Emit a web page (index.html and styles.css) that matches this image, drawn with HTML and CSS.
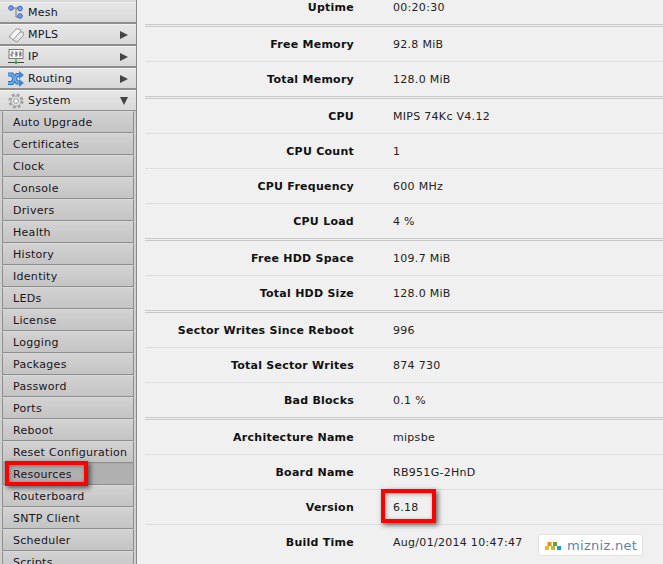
FILE: index.html
```html
<!DOCTYPE html>
<html lang="en">
<head>
<meta charset="utf-8">
<title>Resources</title>
<link rel="stylesheet" href="styles.css">
</head>
<body>
<div class="app">
  <nav class="side">
    <div class="top"><svg class="ico" viewBox="0 0 16 16"><path d="M3 3H13M8 3V12H13" fill="none" stroke="#777" stroke-width="1"/><circle cx="3" cy="3" r="2.3" fill="#7f9fe8" stroke="#3d62c4"/><circle cx="12" cy="3.5" r="2.3" fill="#7f9fe8" stroke="#3d62c4"/><circle cx="12" cy="11" r="2.3" fill="#7f9fe8" stroke="#3d62c4"/></svg><span>Mesh</span></div>
    <div class="top"><svg class="ico" viewBox="0 0 16 16"><path d="M1 10L8 2H12L13 5L6 13Z" fill="#f4f4f4" stroke="#999"/><path d="M5 13L12 5H15L16 8L9 15Z" fill="#e8e8e8" stroke="#999"/></svg><span>MPLS</span><i class="arrow"></i></div>
    <div class="top"><svg class="ico" viewBox="0 0 16 16"><rect x="1" y="0.500" width="14" height="9" fill="#f6f6f6" stroke="#777"/><path d="M3 3H5V5H3V7H5M7 3H9V5H7H9V7H7M11 3H13V5H11H13V7H11" fill="none" stroke="#555" stroke-width=".8"/><path d="M0 13.500H16" stroke="#444"/><path d="M8 10V13" stroke="#3a3"/><circle cx="8" cy="13.500" r="1.500" fill="#2fae2f"/></svg><span>IP</span><i class="arrow"></i></div>
    <div class="top"><svg class="ico" viewBox="0 0 16 16"><path d="M0 3.500H4L9 11.500H12M0 12H4L9 4H12" fill="none" stroke="#2f72c8" stroke-width="4"/><path d="M0 3.500H4L9 11.500H12M0 12H4L9 4H12" fill="none" stroke="#6aa9ea" stroke-width="2"/><path d="M11 0L16 4L11 8ZM11 8L16 12L11 16Z" fill="#3d86d8"/></svg><span>Routing</span><i class="arrow"></i></div>
    <div class="top"><svg class="ico" viewBox="0 0 16 16"><circle cx="8" cy="8" r="6.200" fill="none" stroke="#a2a2a2" stroke-width="2.800" stroke-dasharray="2.700 2.170"/><circle cx="8" cy="8" r="5" fill="#e4e4e4" stroke="#a8a8a8"/><circle cx="8" cy="8" r="2.400" fill="#f4f4f4" stroke="#999"/></svg><span>System</span><i class="arrow down"></i></div>
    <div class="sub">
      <a>Auto Upgrade</a><a>Certificates</a><a>Clock</a><a>Console</a><a>Drivers</a><a>Health</a><a>History</a><a>Identity</a><a>LEDs</a><a>License</a><a>Logging</a><a>Packages</a><a>Password</a><a>Ports</a><a>Reboot</a><a>Reset Configuration</a><a class="on">Resources</a><a>Routerboard</a><a>SNTP Client</a><a>Scheduler</a><a>Scripts</a>
    </div>
    <div class="mark mark-res"></div>
  </nav>
  <main class="main">
    <section class="group">
      <div class="row"><b>Uptime</b><span>00:20:30</span></div>
    </section>
    <section class="group">
      <div class="row"><b>Free Memory</b><span>92.8 MiB</span></div>
      <div class="row"><b>Total Memory</b><span>128.0 MiB</span></div>
    </section>
    <section class="group">
      <div class="row"><b>CPU</b><span>MIPS 74Kc V4.12</span></div>
      <div class="row"><b>CPU Count</b><span>1</span></div>
      <div class="row"><b>CPU Frequency</b><span>600 MHz</span></div>
      <div class="row"><b>CPU Load</b><span>4 %</span></div>
    </section>
    <section class="group">
      <div class="row"><b>Free HDD Space</b><span>109.7 MiB</span></div>
      <div class="row"><b>Total HDD Size</b><span>128.0 MiB</span></div>
    </section>
    <section class="group">
      <div class="row"><b>Sector Writes Since Reboot</b><span>996</span></div>
      <div class="row"><b>Total Sector Writes</b><span>874 730</span></div>
      <div class="row"><b>Bad Blocks</b><span>0.1 %</span></div>
    </section>
    <section class="group">
      <div class="row"><b>Architecture Name</b><span>mipsbe</span></div>
      <div class="row"><b>Board Name</b><span>RB951G-2HnD</span></div>
      <div class="row"><b>Version</b><span>6.18</span></div>
      <div class="row"><b>Build Time</b><span>Aug/01/2014 10:47:47</span></div>
    </section>
    <div class="mark mark-ver"></div>
    <div class="badge"><svg class="logo" viewBox="0 0 16 9"><rect x="0" y="5" width="4" height="4" fill="#f5b81c"/><rect x="2.500" y="1" width="4" height="4" fill="#ee8a1d"/><rect x="6" y="5" width="4" height="4" fill="#a6c93c"/><rect x="8" y="1" width="4" height="4" fill="#7d9a34"/><rect x="12" y="5" width="4" height="4" fill="#1a9ad6"/></svg><span>mizniz.net</span></div>
  </main>
</div>
</body>
</html>
```
FILE: styles.css
```css
* { box-sizing: border-box; }
html, body { margin: 0; height: 100%; overflow: hidden; }
body { background: #f0f0f0; font: 11px "DejaVu Sans", Verdana, sans-serif; letter-spacing: .29px; color: #111; }
.app { display: flex; height: 564px; overflow: hidden; position: relative; }
.side { width: 137px; flex: none; border-right: 1px solid #8a8a8a; background: #d8d8d8; padding-top: 2px; }
.top {
  height: 22px; display: flex; align-items: center; gap: 4px; padding: 0 8px;
  background: linear-gradient(#e6e6e6, #d9d9d9);
  border-bottom: 2px solid #8e8e8e; border-top: 1px solid #f2f2f2; color: #14141e;
}
.ico { width: 16px; height: 16px; flex: none; }
.top span { flex: 1; }
.arrow { width: 0; height: 0; border-left: 8px solid #444; border-top: 4px solid transparent; border-bottom: 4px solid transparent; }
.arrow.down { border-left: 4px solid transparent; border-right: 4px solid transparent; border-top: 8px solid #444; border-bottom: 0; }
.sub { border-left: 2px solid #cfcfcf; border-right: 2px solid #cfcfcf; margin-top: -1px; }
.sub a {
  display: flex; align-items: center; height: 22px; padding-left: 10px;
  background: linear-gradient(#d2d2d2, #c4c4c4);
  border-bottom: 1px solid #8e8e8e; border-top: 1px solid #d9d9d9;
  border-left: 1px solid #8e8e8e; border-right: 1px solid #8e8e8e; color: #1a1420;
}
.sub a.on { background: #b0b0b0; border-top-color: #a8a8a8; }
.mark { position: absolute; border: 4px solid #f00; box-shadow: 2px 2px 5px rgba(0,0,0,.6), inset 1px 1px 4px rgba(0,0,0,.35); pointer-events: none; }
.mark-res { left: 5px; top: 461px; width: 83px; height: 25px; }
.mark-ver { left: 381px; top: 489px; width: 55px; height: 34px; }
.main { flex: 1; padding-left: 8px; margin-top: -10px; }
.group { border-bottom: 3px double #c8c8c8; }
.group:last-of-type { border-bottom: 0; }
.row { height: 35px; display: flex; align-items: center; border-bottom: 1px solid #dedede; }
.group .row:last-child { height: 34px; border-bottom: 0; }
.row b { width: 209px; text-align: right; color: #111; letter-spacing: .25px; }
.row span { margin-left: 39px; color: #222; }
.badge {
  position: absolute; left: 538px; top: 534px; width: 105px; height: 22px;
  background: #fff; border: 1px solid #e2e2e2; border-radius: 3px;
  display: flex; align-items: center; gap: 6px; padding-left: 6px;
  color: #5f7fb3; font: 13px "DejaVu Sans", sans-serif; letter-spacing: .3px;
}
.logo { width: 16px; height: 9px; flex: none; }
```
